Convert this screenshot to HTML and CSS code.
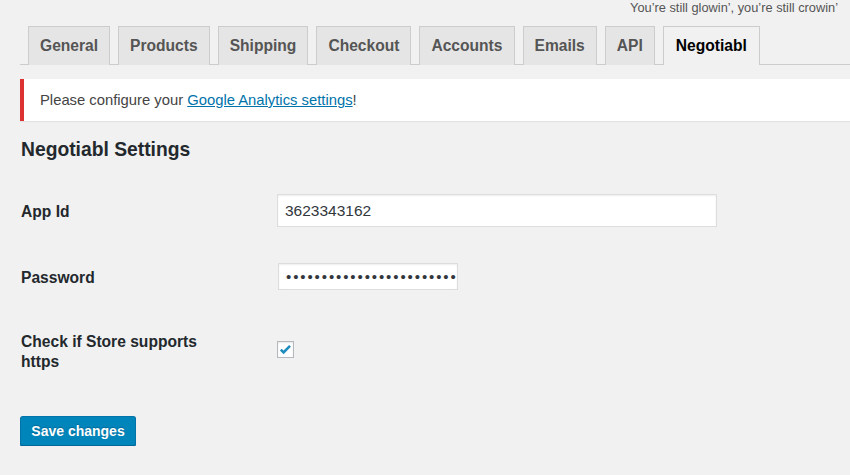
FILE: index.html
```html
<!DOCTYPE html>
<html>
<head>
<meta charset="utf-8">
<link rel="stylesheet" href="styles.css">
</head>
<body>
<div class="topline">You’re still glowin’, you’re still crowin’</div>
<div class="wrap">
  <nav class="tabs">
    <a class="tab">General</a>
    <a class="tab">Products</a>
    <a class="tab">Shipping</a>
    <a class="tab">Checkout</a>
    <a class="tab">Accounts</a>
    <a class="tab">Emails</a>
    <a class="tab">API</a>
    <a class="tab active">Negotiabl</a>
  </nav>
  <div class="notice">Please configure your <a class="link">Google Analytics settings</a>!</div>
  <h2 class="title">Negotiabl Settings</h2>
  <div class="row row-app">
    <label class="lbl lbl-mid">App Id</label>
    <input class="field field-wide" type="text" value="3623343162">
  </div>
  <div class="row row-pass">
    <label class="lbl lbl-mid">Password</label>
    <input class="field field-pass" type="password" value="abcdefghijklmnopqrstuvwxyz0123">
  </div>
  <div class="row row-check">
    <label class="lbl">Check if Store supports<br>https</label>
    <span class="checkbox"><svg width="15" height="15" viewBox="0 0 15 15"><path d="M2.8 7.6 L5.6 10.4 L12 3.8" fill="none" stroke="#1e8cbe" stroke-width="2.6" stroke-linecap="butt" stroke-linejoin="miter"/></svg></span>
  </div>
  <button class="btn">Save changes</button>
</div>
</body>
</html>
```
FILE: styles.css
```css
* { box-sizing: border-box; }
body {
  margin: 0;
  background: #f1f1f1;
  font-family: "Liberation Sans", Arial, sans-serif;
  color: #23282d;
}
.topline {
  height: 16px;
  line-height: 16px;
  font-size: 12.8px;
  color: #555;
  text-align: right;
  padding-right: 12px;
}
.wrap {
  padding-left: 20px;
  padding-top: 10px;
}
.tabs {
  display: flex;
  gap: 8px;
  padding-left: 8px;
  border-bottom: 1px solid #ccc;
  height: 39px;
}
.tab {
  display: block;
  height: 39px;
  line-height: 37px;
  padding: 0 11px;
  border: 1px solid #ccc;
  border-bottom: none;
  background: #e5e5e5;
  color: #555;
  font-weight: bold;
  font-size: 15.6px;
}
.tab.active {
  background: #f1f1f1;
  color: #000;
  height: 39px;
  margin-bottom: -1px;
  padding: 0 12px;
}
.notice {
  margin-top: 14px;
  height: 42px;
  background: #fff;
  border-left: 4px solid #dc3232;
  box-shadow: 0 1px 1px rgba(0,0,0,.06);
  padding-left: 16px;
  line-height: 42px;
  font-size: 14.8px;
  color: #444;
}
.link {
  color: #0073aa;
  text-decoration: underline;
}
.title {
  margin: 18px 0 0 1px;
  font-size: 19.3px;
  line-height: 22px;
  font-weight: bold;
  color: #23282d;
}
.row {
  display: grid;
  grid-template-columns: 257px auto;
  align-items: center;
  justify-content: start;
}
.row-app { margin-top: 33px; }
.row-pass { margin-top: 36px; }
.row-check { margin-top: 42px; align-items: start; }
.lbl {
  font-size: 15.6px;
  font-weight: bold;
  line-height: 20px;
  color: #23282d;
  padding-left: 1px;
}
.lbl-mid {
  padding-top: 3px;
}
.field {
  border: 1px solid #ddd;
  background: #fff;
  box-shadow: inset 0 1px 2px rgba(0,0,0,.07);
  font-family: "Liberation Sans", Arial, sans-serif;
  font-size: 15.5px;
  color: #32373c;
  outline: none;
  margin: 0;
}
.field-wide {
  width: 440px;
  height: 33px;
  padding: 0 7px;
}
.field-pass {
  width: 180px;
  height: 27px;
  padding: 0 1px 0 7px;
  margin-left: 1px;
  letter-spacing: 1.9px;
  font-size: 15px;
}
.checkbox {
  display: flex;
  align-items: center;
  justify-content: center;
  width: 17px;
  height: 17px;
  margin-top: 9px;
  border: 1px solid #b4b9be;
  background: #fff;
  box-shadow: inset 0 1px 2px rgba(0,0,0,.1);
}
.btn {
  display: block;
  margin-top: 44px;
  width: 116px;
  height: 30px;
  background: #0085ba;
  border: 1px solid #0073aa;
  border-bottom-color: #006799;
  border-radius: 3px;
  box-shadow: 0 1px 0 #006799;
  color: #fff;
  font-family: "Liberation Sans", Arial, sans-serif;
  font-size: 14px;
  font-weight: bold;
  padding: 0;
  text-shadow: 0 -1px 1px #006799;
}
```
